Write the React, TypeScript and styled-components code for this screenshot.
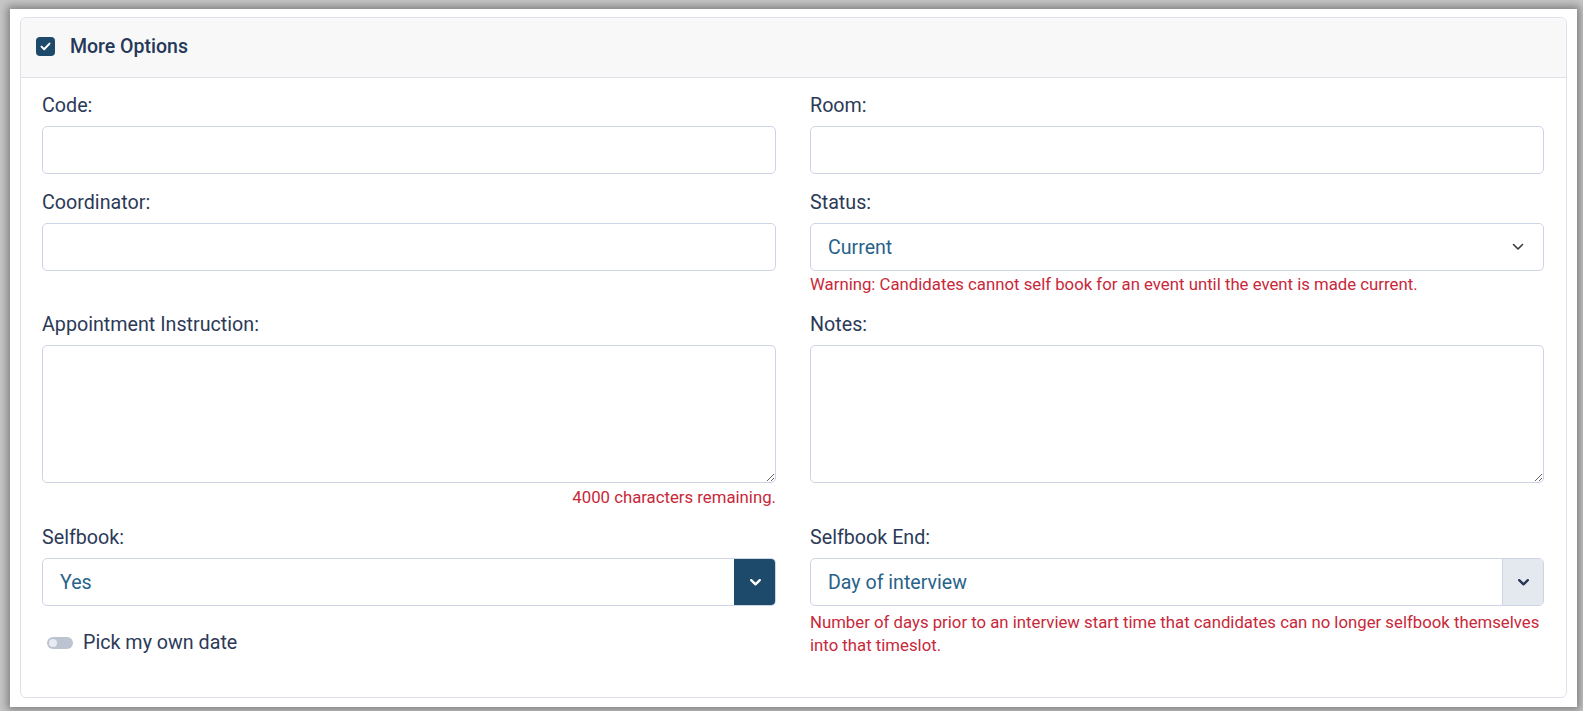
import React from "react";
import styled, { createGlobalStyle } from "styled-components";

const GlobalStyle = createGlobalStyle`
  html, body { margin: 0; padding: 0; }
  body {
    background: #c6c6c6;
    font-family: Roboto, "Liberation Sans", Arial, sans-serif;
  }
`;

const Frame = styled.div`
  box-sizing: border-box;
  height: 711px;
  padding: 9px 6px 4px 10px;
`;

const Screen = styled.div`
  box-sizing: border-box;
  height: 100%;
  background: #ffffff;
  box-shadow: 0 0 8px 3px rgba(0, 0, 0, 0.35);
  padding: 8px 10px 9px 10px;
`;

const Card = styled.section`
  box-sizing: border-box;
  height: 100%;
  border: 1px solid #dde2ea;
  border-radius: 6px;
  overflow: hidden;
  display: flex;
  flex-direction: column;
`;

const Header = styled.div`
  height: 59px;
  flex: none;
  background: #f8f8f9;
  border-bottom: 1px solid #dee2e8;
  display: flex;
  align-items: center;
  padding-left: 15px;
  gap: 15px;
`;

const CheckBox = styled.span`
  width: 19px;
  height: 19px;
  border-radius: 4px;
  background: #1d4a6b;
  display: inline-flex;
  align-items: center;
  justify-content: center;
  margin-top: -2px;
`;

const HeaderTitle = styled.span`
  font-size: 19.5px;
  font-weight: 500;
  color: #253858;
  margin-top: -2px;
`;

const Body = styled.div`
  padding: 15px 22px 0 21px;
`;

const Row = styled.div`
  display: grid;
  grid-template-columns: 1fr 1fr;
  column-gap: 34px;
  align-items: start;
  margin-bottom: 16px;
`;

const Field = styled.div`
  display: flex;
  flex-direction: column;
  min-width: 0;
`;

const Label = styled.label`
  font-size: 19.7px;
  line-height: 25px;
  color: #2c3a58;
  margin-bottom: 8px;
`;

const TextInput = styled.input`
  box-sizing: border-box;
  width: 100%;
  height: 48px;
  border: 1px solid #cdd4e3;
  border-radius: 5px;
  background: #fff;
  font: inherit;
  font-size: 19.6px;
  padding: 0 17px;
  outline: none;
`;

const TextArea = styled.textarea`
  box-sizing: border-box;
  width: 100%;
  height: 138px;
  border: 1px solid #cdd4e3;
  border-radius: 5px;
  background: #fff;
  font: inherit;
  font-size: 19.6px;
  padding: 8px 17px;
  outline: none;
  display: block;
`;

const SelectBox = styled.div`
  box-sizing: border-box;
  width: 100%;
  height: 48px;
  border: 1px solid #cdd4e3;
  border-radius: 5px;
  background: #fff;
  display: flex;
  align-items: stretch;
  overflow: hidden;
`;

const SelectValue = styled.span`
  flex: 1;
  display: flex;
  align-items: center;
  padding-left: 17px;
  font-size: 19.6px;
  color: #29628a;
`;

const PlainArrow = styled.span`
  display: flex;
  align-items: center;
  padding-right: 19px;
`;

const Addon = styled.span<{ $dark?: boolean }>`
  width: 40px;
  flex: none;
  display: flex;
  align-items: center;
  justify-content: center;
  background: ${(p) => (p.$dark ? "#1d4a6b" : "#e4e8ef")};
  border-left: 1px solid ${(p) => (p.$dark ? "#1d4a6b" : "#cdd4e3")};
`;

const Help = styled.div<{ $right?: boolean; $gap?: number }>`
  font-size: 16.75px;
  line-height: 23px;
  margin-top: ${(p) => p.$gap ?? 3}px;
  color: #c8283a;
  text-align: ${(p) => (p.$right ? "right" : "left")};
`;

const ToggleLine = styled.div`
  display: flex;
  align-items: center;
  gap: 10px;
  margin-top: 24px;
  padding-left: 5px;
  font-size: 19.7px;
  line-height: 25px;
  color: #2c3a58;
`;

const Switch = styled.span`
  position: relative;
  width: 26px;
  height: 12px;
  border-radius: 6px;
  background: #bcc3d1;
  flex: none;
`;

const Knob = styled.span`
  position: absolute;
  left: 2px;
  top: 2px;
  width: 8px;
  height: 8px;
  border-radius: 50%;
  background: #e8ebf1;
`;

const ThinChevron = () => (
  <svg width="12" height="8" viewBox="0 0 12 8" fill="none">
    <path d="M1.5 1.5 L6 6 L10.5 1.5" stroke="#343a40" strokeWidth="1.6" strokeLinecap="round" strokeLinejoin="round" />
  </svg>
);

const BoldChevron = ({ color }: { color: string }) => (
  <svg width="13" height="9" viewBox="0 0 13 9" fill="none">
    <path d="M2.2 2.2 L6.5 6.3 L10.8 2.2" stroke={color} strokeWidth="2.4" strokeLinecap="round" strokeLinejoin="round" />
  </svg>
);

export default function App() {
  return (
    <>
      <GlobalStyle />
      <Frame>
        <Screen>
          <Card>
            <Header>
              <CheckBox>
                <svg width="11" height="9" viewBox="0 0 11 9" fill="none">
                  <path d="M1.5 4.6 L4.2 7.2 L9.5 1.6" stroke="#fff" strokeWidth="2" strokeLinecap="round" strokeLinejoin="round" />
                </svg>
              </CheckBox>
              <HeaderTitle>More Options</HeaderTitle>
            </Header>
            <Body>
              <Row>
                <Field>
                  <Label>Code:</Label>
                  <TextInput />
                </Field>
                <Field>
                  <Label>Room:</Label>
                  <TextInput />
                </Field>
              </Row>
              <Row>
                <Field>
                  <Label>Coordinator:</Label>
                  <TextInput />
                </Field>
                <Field>
                  <Label>Status:</Label>
                  <SelectBox>
                    <SelectValue>Current</SelectValue>
                    <PlainArrow>
                      <ThinChevron />
                    </PlainArrow>
                  </SelectBox>
                  <Help $gap={2}>Warning: Candidates cannot self book for an event until the event is made current.</Help>
                </Field>
              </Row>
              <Row>
                <Field>
                  <Label>Appointment Instruction:</Label>
                  <TextArea />
                  <Help $right>4000 characters remaining.</Help>
                </Field>
                <Field>
                  <Label>Notes:</Label>
                  <TextArea />
                </Field>
              </Row>
              <Row>
                <Field>
                  <Label>Selfbook:</Label>
                  <SelectBox>
                    <SelectValue>Yes</SelectValue>
                    <Addon $dark>
                      <BoldChevron color="#ffffff" />
                    </Addon>
                  </SelectBox>
                  <ToggleLine>
                    <Switch>
                      <Knob />
                    </Switch>
                    Pick my own date
                  </ToggleLine>
                </Field>
                <Field>
                  <Label>Selfbook End:</Label>
                  <SelectBox>
                    <SelectValue>Day of interview</SelectValue>
                    <Addon>
                      <BoldChevron color="#253858" />
                    </Addon>
                  </SelectBox>
                  <Help $gap={5}>
                    Number of days prior to an interview start time that candidates can no longer selfbook themselves
                    into that timeslot.
                  </Help>
                </Field>
              </Row>
            </Body>
          </Card>
        </Screen>
      </Frame>
    </>
  );
}
